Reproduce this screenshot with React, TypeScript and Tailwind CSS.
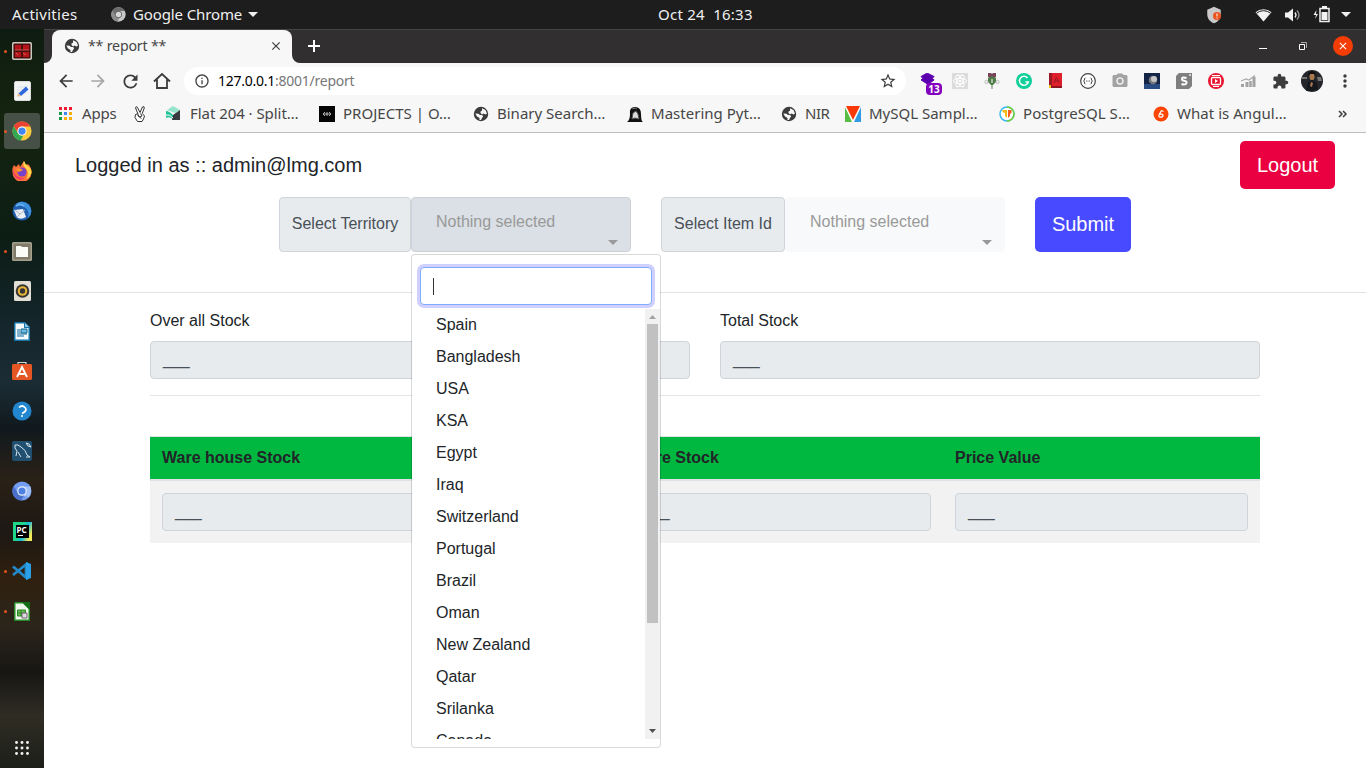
import type { ReactNode } from 'react';
import {
  MdArrowBack,
  MdArrowForward,
  MdClose,
  MdExtension,
  MdInfoOutline,
  MdMoreVert,
  MdPhotoCamera,
  MdRefresh,
  MdShield,
  MdStarBorder,
} from 'react-icons/md';

const countries = [
  'Spain', 'Bangladesh', 'USA', 'KSA', 'Egypt', 'Iraq', 'Switzerland', 'Portugal',
  'Brazil', 'Oman', 'New Zealand', 'Qatar', 'Srilanka', 'Canada',
];

function Globe() {
  return (
    <svg className="shrink-0" width="16" height="16" viewBox="0 0 16 16">
      <circle cx="8" cy="8" r="7.200" fill="#3c3c3c" />
      <path d="M9 2.200 12.500 4l1.500 3.500-1.500 1-2-1L9 8.500 7.500 7V5.500L9 4.800zM2.300 7.500l3.200.3L7 9h2l1.200 1.200L9 12l-1 2H6.500v-2L4 10.500z" fill="#f7f7f7" />
    </svg>
  );
}

function Wheel({ size, gray = false }: { size: number; gray?: boolean }) {
  const [a, b, c, d] = gray
    ? ['#6d6d6d', '#8c8c8c', '#c9c9c9', '#d8d8d8']
    : ['#ea4335', '#34a853', '#fbc93c', '#4285f4'];
  return (
    <svg width={size} height={size} viewBox="0 0 48 48">
      <circle cx="24" cy="24" r="23" fill={c} />
      <path d="M4 12.500A23 23 0 0 1 44 13H24a11 11 0 0 0-9.500 16.500z" fill={a} />
      <path d="M4 12.500 14.500 29.500A11 11 0 0 0 27 34.600L21 47A23 23 0 0 1 4 12.500z" fill={b} />
      <circle cx="24" cy="24" r="11" fill={gray ? '#555' : '#fff'} />
      <circle cx="24" cy="24" r="8.700" fill={d} />
    </svg>
  );
}

function Caret({ className }: { className: string }) {
  return (
    <svg className={className} width="10" height="5" viewBox="0 0 10 5">
      <path d="M0 0h10L5 5z" fill="currentColor" />
    </svg>
  );
}

function TopBar() {
  return (
    <header className="flex h-[29px] shrink-0 items-center bg-[#1d1d1d] text-[15px] text-[#f0f0f0]">
      <span className="ml-3 w-[99px] tracking-[0.3px]">Activities</span>
      <Wheel size={15} gray />
      <span className="ml-[7px] w-[115px] whitespace-nowrap tracking-[-0.12px]">Google Chrome</span>
      <Caret className="ml-0 text-[#eee]" />
      <span className="ml-[400px] whitespace-pre tracking-[0.25px]">Oct 24  16:33</span>
      <div className="ml-auto flex items-center pr-[15px]">
        <div className="relative mr-[33px] h-4 w-[15px] text-[#c9c9c9]">
          <MdShield size={18} className="-ml-[2px] -mt-px" />
          <svg className="absolute left-[6px] top-[5px]" width="8" height="8" viewBox="0 0 8 8">
            <circle cx="4" cy="4" r="4" fill="#e95420" />
            <path d="M4 1.500v3M4 5.500v1" stroke="#fff" />
          </svg>
        </div>
        <svg width="17" height="14" viewBox="0 0 17 14">
          <path d="M.5 4.200a12 12 0 0 1 16 0L8.500 13.500z" fill="#f2f2f2" />
          <path d="M1.500 5.200a11 11 0 0 1 14 0" fill="none" stroke="#1d1d1d" strokeWidth="1" />
        </svg>
        <svg className="ml-[13px]" width="16" height="14" viewBox="0 0 16 14">
          <path d="M0 4.500h3L8 .5v13L3 9.500H0z" fill="#f2f2f2" />
          <path d="M10 4.500q2 2.500 0 5" fill="none" stroke="#eee" strokeWidth="1.300" />
          <path d="M12 2.500q4 4.500 0 9" fill="none" stroke="#999" strokeWidth="1.300" />
        </svg>
        <svg className="ml-[12px]" width="18" height="17" viewBox="0 0 18 17">
          <path d="M3.500 4 .5 9H3l-1 4 3-5H3z" fill="#eee" />
          <path d="M7 2.500h9v13H7z" fill="none" stroke="#f2f2f2" strokeWidth="1.500" />
          <path d="M9 0h5v2H9zM8.500 6h6v8h-6z" fill="#f2f2f2" />
        </svg>
        <Caret className="ml-[10px] text-[#eee]" />
      </div>
    </header>
  );
}

function DockIcon({ children, running = false, active = false }: { children: ReactNode; running?: boolean; active?: boolean }) {
  return (
    <div className="flex h-10 w-11 items-center">
      <span className={`z-10 ml-1 h-[3px] w-[3px] shrink-0 rounded-full ${running ? 'bg-[#e95420]' : ''}`} />
      <span className={`-ml-[3px] flex h-9 w-9 shrink-0 items-center justify-center rounded-[3px] ${active ? 'bg-[#465047]' : ''}`}>
        {children}
      </span>
    </div>
  );
}

function Dock() {
  return (
    <nav className="flex w-11 shrink-0 flex-col bg-[linear-gradient(180deg,#0d1c10_0%,#15240f_12%,#0c1d14_28%,#132429_38%,#1b2c35_48%,#10191d_54%,#2a2117_61%,#1c1813_68%,#30200f_74%,#2b251b_81%,#171614_87%,#2f2d23_93%,#1c1e19_100%)] pt-[2px]">
      <DockIcon running>
        <svg className="mb-px" width="20" height="18" viewBox="0 0 20 18">
          <rect x=".7" y=".7" width="18.600" height="16.600" rx="1.500" fill="#4e100f" stroke="#c9c9c0" strokeWidth="1.500" />
          <path d="M3 3h6v5H3zM11 3h6v5h-6zM3 10h6v5H3zM11 10h6v5h-6z" fill="#b51419" />
          <path d="m4 11 2 2m5-2 3 2M3 8h14" stroke="#e58b84" strokeWidth=".6" />
        </svg>
      </DockIcon>
      <DockIcon>
        <svg width="17" height="20" viewBox="0 0 17 20">
          <rect x=".5" y=".5" width="16" height="19" rx="1.500" fill="#f3f4f4" stroke="#ddd" />
          <path d="M3 6h10M3 9h10M3 12h10" stroke="#d3dae0" strokeWidth=".7" />
          <path d="m4.500 12.500 7.500-7 2.500 3-7.500 6.500z" fill="#2f68dd" />
          <path d="m3 15.500 1.500-3 2.500 2.500z" fill="#e9b679" />
        </svg>
      </DockIcon>
      <DockIcon running active><Wheel size={20} /></DockIcon>
      <DockIcon>
        <svg width="20" height="20" viewBox="0 0 20 20">
          <path d="M2 4 4 6 7 3l1 3 4-6q1 3 3 4l1-1q4 4 3.500 9A9.500 9.500 0 0 1 .5 11Q0 7 2 4z" fill="#ff7139" />
          <path d="M12 0q1 3 3 4 5 4 4.500 8-2 5-5 6 3-7-1-11Q10 4 12 0z" fill="#ffd34a" />
          <path d="M.7 8q2 9 12 9-4 3-8 .5Q.5 14 .7 8z" fill="#f33b68" />
          <circle cx="10" cy="11" r="4.500" fill="#7542c9" />
          <path d="M4 8q4-2 7 1-2 1-4 2-2 0-3-3z" fill="#ff972f" />
        </svg>
      </DockIcon>
      <DockIcon>
        <svg width="20" height="20" viewBox="0 0 20 20">
          <circle cx="10" cy="10" r="9.500" fill="#215ead" />
          <path d="M4 3Q11-2 17 4q5 7-1 13 2-8-4-11-4-3-8-3z" fill="#3d91dd" />
          <path d="m2 9 9-1 3 8q-5 3-9 .5z" fill="#e9eef3" />
          <path d="m3 9 5 4 5-4M8 13l-3 3" fill="none" stroke="#aab7c6" />
          <path d="M4 5q4-3 8 0" fill="none" stroke="#65b3ee" strokeWidth="2" />
        </svg>
      </DockIcon>
      <DockIcon running>
        <svg width="20" height="19" viewBox="0 0 20 19">
          <rect width="20" height="19" rx="1.500" fill="#a6a18e" />
          <rect x="1.500" y="1.500" width="17" height="16" rx="1" fill="#807b6b" />
          <path d="M4 4h5l1 1h6v10H4z" fill="#fafaf7" />
        </svg>
      </DockIcon>
      <DockIcon>
        <svg width="17" height="20" viewBox="0 0 17 20">
          <rect width="17" height="20" rx="1.500" fill="#e3dfd4" />
          <circle cx="8.500" cy="10" r="6.800" fill="#343434" />
          <circle cx="8.500" cy="10" r="4.800" fill="#e8b636" />
          <circle cx="8.500" cy="10" r="2.700" fill="#343434" />
        </svg>
      </DockIcon>
      <DockIcon>
        <svg width="16" height="19" viewBox="0 0 16 19">
          <path d="M1 0h10l5 5v14H0V1z" fill="#1473a7" />
          <path d="M1.500 1.500H10V6h4.500v11.500h-13z" fill="#f6fafc" />
          <path d="m11 1 4 4h-4z" fill="#90c6df" />
          <path d="M3 8h3M3 10h3M3 12h10M3 14h7M7 7h6v4H7z" stroke="#0c6998" strokeWidth="1" fill="#74b8da" />
        </svg>
      </DockIcon>
      <DockIcon>
        <svg className="mb-px" width="20" height="20" viewBox="0 0 20 20">
          <path d="M6 4V1.500h8V4" fill="none" stroke="#d7d4ca" strokeWidth="1.200" />
          <path d="M1 3h18l1 1v14l-1 1H1l-1-1V4z" fill="#e65625" />
          <path d="m5 16 5-10 5 10M6 13h8" stroke="#fff" strokeWidth="1.900" fill="none" />
        </svg>
      </DockIcon>
      <DockIcon>
        <svg width="20" height="20" viewBox="0 0 20 20">
          <circle cx="10" cy="10" r="9.500" fill="#2387d0" />
          <path d="M7 6.500q3-3 6 0t-3 6" fill="none" stroke="#fff" strokeWidth="1.700" />
          <circle cx="10" cy="15" r="1" fill="#fff" />
        </svg>
      </DockIcon>
      <DockIcon>
        <svg width="20" height="20" viewBox="0 0 20 20">
          <rect width="20" height="20" rx="2" fill="#204f70" />
          <path d="M4 15 5 10 3 7V4q3-1 6 2 5 3 6 8l3 2-4 0M6 11l3 5M14 2l2 3 3 1-2-3z" fill="none" stroke="#d4e5ef" strokeWidth="1" />
        </svg>
      </DockIcon>
      <DockIcon>
        <svg width="20" height="20" viewBox="0 0 20 20">
          <circle cx="10" cy="10" r="9.500" fill="#729df0" />
          <path d="M1.500 5A9.500 9.500 0 0 0 9 19.400L13 13 6 12z" fill="#4c6fca" />
          <path d="M10 5.500h8.500Q20 11 17 16l-5-1z" fill="#a3c0f7" />
          <circle cx="10" cy="10" r="4.800" fill="#e8effd" />
          <circle cx="10" cy="10" r="3.600" fill="#4c80e1" />
        </svg>
      </DockIcon>
      <DockIcon>
        <div className="flex h-[19px] w-[19px] items-center justify-center bg-[linear-gradient(115deg,#20d789_40%,#16bada_60%,#f2e958_85%)]">
          <div className="flex h-[13px] w-[13px] flex-col bg-black pl-px text-[8px] font-bold leading-[9px] text-white">
            PC<span className="ml-px mt-px h-px w-[5px] bg-white" />
          </div>
        </div>
      </DockIcon>
      <DockIcon running>
        <svg width="20" height="18" viewBox="0 0 20 18">
          <path d="m1 4.500 13 11v-13L1 13" fill="none" stroke="#2489ca" strokeWidth="2.700" />
          <path d="m14 0 5 2v14l-5 2z" fill="#2ba0e8" />
        </svg>
      </DockIcon>
      <DockIcon running>
        <svg width="16" height="19" viewBox="0 0 16 19">
          <path d="M1 0h9l6 6v13H0V1z" fill="#238a25" />
          <path d="M1.500 1.500H9L14.500 7v10.500h-13z" fill="#f1f7ed" />
          <path d="M8 0h8v8z" fill="#126d17" />
          <path d="M3.500 8h8v6h-8zM3.500 11h8M7 8v6" fill="#77b854" stroke="#238a25" />
          <path d="M8 11h5v5H8z" fill="#ddd" stroke="#735b74" />
        </svg>
      </DockIcon>
      <svg className="mb-[13px] ml-[15px] mt-auto" width="14" height="14" viewBox="0 0 13 13" fill="#f2f2f2">
        {[1.4, 6.5, 11.6].map((y) => [1.4, 6.5, 11.6].map((x) => <circle key={`${x}-${y}`} cx={x} cy={y} r="1.350" />))}
      </svg>
    </nav>
  );
}

function TabStrip() {
  return (
    <div className="flex h-[34px] border-t border-[#454545] bg-[#322f30]">
      <span className="w-2 bg-[#f7f7f7]"><span className="block h-full rounded-br-lg bg-[#322f30]" /></span>
      <div className="flex h-[34px] w-60 items-center rounded-t-lg bg-[#f7f7f7] px-3 pb-[2px] text-[14.2px] text-[#464646]">
        <Globe />
        <span className="ml-2 tracking-[-0.2px]">** report **</span>
        <MdClose size={14} className="ml-auto mr-[-3px] text-[#3c3c3c]" />
      </div>
      <span className="w-2 bg-[#f7f7f7]"><span className="block h-full rounded-bl-lg bg-[#322f30]" /></span>
      <svg className="ml-2 mt-[10px]" width="12" height="12"><path d="M6 0v12M0 6h12" stroke="#fff" strokeWidth="2" /></svg>
      <div className="ml-auto flex items-center pb-px pr-[13px]">
        <span className="mr-8 mt-1 h-px w-2 bg-white" />
        <svg className="mr-[26px]" width="8" height="8">
          <path d="M2 .5h5.500V6" fill="none" stroke="#aaa" /><path d="M.5 2.500h5v5h-5z" fill="none" stroke="#fff" />
        </svg>
        <span className="flex h-5 w-5 items-center justify-center rounded-full bg-[#f43d04] text-white"><MdClose size={12} /></span>
      </div>
    </div>
  );
}

function Extensions() {
  return (
    <div className="ml-[14px] flex items-center">
      <div className="relative h-[17px] w-[32px]">
        <svg width="16" height="14" viewBox="0 0 18 16"><path d="m8 0 8 4-2 2 2 2-7 5-8-5 2-2-2-2z" fill="#5b00ae" stroke="#5b00ae" /></svg>
        <span className="absolute left-[6px] top-[10px] h-3 w-4 rounded-sm bg-[#8200bd] text-center text-[10px] font-bold leading-[12px] text-white">13</span>
      </div>
      <svg className="mr-4" width="16" height="16" viewBox="0 0 16 16">
        <path d="M0 0h16v16H0z" fill="#dcdcdc" />
        <g fill="none" stroke="#fff"><ellipse cx="8" cy="8" rx="6.500" ry="2.600" /><ellipse cx="8" cy="8" rx="6.500" ry="2.600" transform="rotate(60 8 8)" /><ellipse cx="8" cy="8" rx="6.500" ry="2.600" transform="rotate(120 8 8)" /></g>
        <circle cx="8" cy="8" r="1.200" fill="#fff" />
      </svg>
      <svg className="mr-4" width="16" height="16" viewBox="0 0 16 16">
        <path d="M4 0h3l1 1 1-1h3v4l-4 2-4-2z" fill="#7a435c" />
        <path d="m4 5 4-2 4 2v4l-4 4-4-4z" fill="#4e7c46" />
        <circle cx="2.500" cy="9" r="1.700" fill="#eee" stroke="#aaa" strokeWidth=".7" /><circle cx="13.500" cy="9" r="1.700" fill="#eee" stroke="#aaa" strokeWidth=".7" />
        <path d="M7 7h2M7 9h2" stroke="#fff" /><path d="M8 13v3" stroke="#777" />
      </svg>
      <svg className="mr-4" width="16" height="16" viewBox="0 0 16 16">
        <circle cx="8" cy="8" r="8" fill="#11cf9a" />
        <path d="M11.500 5A4.500 4.500 0 1 0 12.300 9H9.500" fill="none" stroke="#fff" strokeWidth="1.500" />
      </svg>
      <svg className="mr-4" width="16" height="16" viewBox="0 0 16 16">
        <path d="M1 0h13v15H1z" fill="#df202b" /><path d="M1 0h3v14H1z" fill="#9b1825" />
        <path d="m6 10 2.500-6 3 6M7 8h4" fill="none" stroke="#9b1825" /><path d="M1 13h13v2H1z" fill="#8d1420" /><path d="M1 12h2v3H1z" fill="#ebc51a" />
      </svg>
      <svg className="mr-4" width="16" height="16" viewBox="0 0 16 16">
        <circle cx="8" cy="8" r="7.300" fill="#fff" stroke="#444" strokeWidth="1.200" />
        <path d="M5.500 5q-1.500 0-1 2l-1 1 1 1q-.5 2 1 2m5-6q1.500 0 1 2l1 1-1 1q.5 2-1 2" fill="none" stroke="#444" />
        <path d="M6 8h1M7.500 8h1M9 8h1" stroke="#444" strokeWidth=".8" />
      </svg>
      <MdPhotoCamera size={18} className="-ml-px mr-[15px] text-[#a3a3a3]" />
      <svg className="mr-4" width="16" height="16" viewBox="0 0 16 16">
        <path d="M0 0h16v16H0z" fill="#142447" /><path d="M0 11h16v5H0z" fill="#294c83" />
        <circle cx="9" cy="7" r="4.300" fill="#777980" /><circle cx="10" cy="6" r="3" fill="#c5c5c5" />
      </svg>
      <svg className="mr-4" width="16" height="16" viewBox="0 0 16 16">
        <path d="M3 0h13v13l-3 3H0V3z" fill="#7f7f7f" />
        <path d="M10.500 5Q6 3.500 6 6q0 1.500 2 1.700 3 .5 2.500 2.300Q9.500 12.500 5.500 11" stroke="#fff" strokeWidth="2" fill="none" /><circle cx="14" cy="2" r="1" fill="#eee" />
      </svg>
      <svg className="mr-4" width="16" height="16" viewBox="0 0 16 16">
        <circle cx="8" cy="8" r="8" fill="#e91430" /><rect x="3.500" y="4.500" width="9" height="7" rx="1" fill="none" stroke="#fff" strokeWidth="1.300" />
        <path d="m7 6 3 2-3 2z" fill="#fff" /><path d="M4 2.500h8M5 13.500h6" stroke="#fff" />
      </svg>
      <svg className="mr-[15px]" width="17" height="16" viewBox="0 0 17 16">
        <path d="M2.500 14v-3M7 14V9M14 14V4" stroke="#a2a2a2" strokeWidth="3" /><path d="M10.500 14V8" stroke="#a2a2a2" strokeWidth="2.500" /><path d="m1 8 5-2 3 1 6-4.500" fill="none" stroke="#aaa" strokeWidth="1.300" />
      </svg>
      <MdExtension size={17} className="mr-3 text-[#3c3c3c]" />
      <svg width="22" height="22" viewBox="0 0 22 22">
        <circle cx="11" cy="11" r="11" fill="#25262b" />
        <path d="M1 7h5v2H1zM16 7h4l1 4h-4z" fill="#77736f" /><ellipse cx="11" cy="6.500" rx="2.500" ry="3.700" fill="#a7784d" />
        <path d="M7 6q0-5 4-5t4 5l-2-2H9z" fill="#111" /><path d="m5 21 2-9 4-2 5 3 1 7z" fill="#14171d" /><path d="m10 12 2 1-1 4-2-1z" fill="#a7784d" />
      </svg>
      <MdMoreVert size={20} className="ml-3 mr-[11px] text-[#3c3c3c]" />
    </div>
  );
}

function Toolbar() {
  return (
    <div className="flex h-9 items-center bg-[#f7f7f7]">
      <MdArrowBack size={20} className="ml-3 text-[#3c3c3c]" />
      <MdArrowForward size={20} className="ml-3 text-[#a6a6a6]" />
      <MdRefresh size={21} className="ml-[12px] text-[#3c3c3c]" />
      <svg className="ml-3" width="18" height="18" viewBox="0 0 18 18"><path d="M1 9.500 9 2l8 7.500M4 7.500V16h10V7.500" fill="none" stroke="#3c3c3c" strokeWidth="1.800" /></svg>
      <div className="ml-[13px] flex h-7 w-[722px] items-center rounded-full bg-white text-[14px] text-[#777]">
        <MdInfoOutline size={16} className="ml-[10px] text-[#444]" />
        <span className="mb-[2px] ml-2 tracking-[-0.25px]"><span className="text-black">127.0.0.1</span>:8001/report</span>
        <MdStarBorder size={18} className="ml-auto mr-[9px] text-[#3c3c3c]" />
      </div>
      <Extensions />
    </div>
  );
}

function Bookmarks() {
  return (
    <div className="flex h-[34px] items-center border-b border-[#bdbdbd] bg-[#f7f7f7] pb-[4px] text-[15px] text-[#464646] whitespace-nowrap">
      <div className="flex w-[90px] items-center pl-[15px]">
        <svg width="13" height="13" viewBox="0 0 13 13">
          <path d="M0 0h3v3H0zM5 0h3v3H5zM10 0h3v3h-3z" fill="#f01a31" />
          <path d="M0 5h3v3H0z" fill="#159b47" /><path d="M5 5h3v3H5z" fill="#4285f4" /><path d="M10 5h3v3h-3z" fill="#fbad09" />
          <path d="M0 10h3v3H0z" fill="#159b47" /><path d="M5 10h3v3H5zM10 10h3v3h-3z" fill="#fbad09" />
        </svg>
        <span className="ml-[10px] tracking-[-0.2px]">Apps</span>
      </div>
      <svg className="mr-5" width="12" height="16" viewBox="0 0 12 16" fill="none" stroke="#333" strokeWidth="1" strokeLinejoin="round">
        <path d="M4 8 1.500 1.800Q2-.2 3.300 1.200L6 6.500 8.500.900Q10.500 0 10.300 2L8.200 7.500 10.500 10l-1 3-1.500 2.500H3.500L1 11.500 1.500 8.500 3.500 7.800 5.500 11" fill="#fff" />
        <path d="M6.500 7.500 8 10l-2.500 1-2-1.500M5.500 11l2 1.500" />
      </svg>
      <div className="flex w-[153px] items-center">
        <svg width="15" height="15" viewBox="0 0 15 15">
          <path d="m7 0 7 4-5 3-8-3z" fill="#95e5ce" /><path d="M0 5q3 0 7 4v4Q3 10 0 12z" fill="#20c398" /><path d="m7 9 7-5v10H6z" fill="#373b3f" /><path d="M0 9q4-1 7 3" fill="none" stroke="#f7f7f7" />
        </svg>
        <span className="ml-[9px] tracking-[-0.05px]">Flat 204 · Split…</span>
      </div>
      <div className="flex w-[154px] items-center">
        <svg width="16" height="16" viewBox="0 0 16 16"><path d="M0 0h16v16H0z" fill="#050505" /><path d="m6 6-2 2 2 2m4-4 2 2-2 2M5 8h6M8 6v4" fill="none" stroke="#ddd" strokeWidth=".8" /></svg>
        <span className="ml-2 tracking-[0.02px]">PROJECTS | O…</span>
      </div>
      <div className="flex w-[154px] items-center"><Globe /><span className="ml-2">Binary Search…</span></div>
      <div className="flex w-[154px] items-center">
        <svg width="16" height="16" viewBox="0 0 16 16"><path d="M0 16q3-2 3-8Q2 1 8 1t6 7 2 8z" fill="#111" /><path d="m5 13 1-6 3-2 2 3 1 5-4-1zM5 3l2-1 3 1" fill="#ddd" stroke="#555" /></svg>
        <span className="ml-2 tracking-[0.02px]">Mastering Pyt…</span>
      </div>
      <div className="flex w-[64px] items-center"><Globe /><span className="ml-2 tracking-[-0.5px]">NIR</span></div>
      <div className="flex w-[154px] items-center">
        <svg width="16" height="16" viewBox="0 0 16 16"><path d="M0 0h16v16H0z" fill="#fff" /><path d="M0 1v15h7z" fill="#58bd45" /><path d="M16 1v15H9z" fill="#329ae2" /><path d="M1 0h14L8 14z" fill="#fa390a" /></svg>
        <span className="ml-2">MySQL Sampl…</span>
      </div>
      <div className="flex w-[154px] items-center">
        <svg width="16" height="16" viewBox="0 0 16 16"><circle cx="8" cy="8" r="7" fill="#fff" stroke="#35b8f2" strokeWidth="1.500" /><path d="M8 1a7 7 0 0 1 0 14" fill="none" stroke="#75cf31" strokeWidth="1.500" /><path d="M3.500 4H8v8L6 10V7L3.500 6z" fill="#f6ba15" /><path d="M9 4h3.500v3L11 8v2l-2 2z" fill="#f55c1d" /></svg>
        <span className="ml-2 tracking-[0.05px]">PostgreSQL S…</span>
      </div>
      <div className="flex items-center">
        <svg width="16" height="16" viewBox="0 0 16 16"><circle cx="8" cy="8" r="7.500" fill="#fa4504" /><path d="M8.500 4.500 6.500 8q-1.500 3 .8 3.200 2.700 0 2.700-2 0-1.500-3-.9m1.500-3.800 2 1" fill="none" stroke="#fff" strokeWidth="1.200" /></svg>
        <span className="ml-2 tracking-[0.04px]">What is Angul…</span>
      </div>
      <svg className="ml-auto mr-[18px]" width="10" height="8" viewBox="0 0 10 8"><path d="m1 1 3 3-3 3m4-6 3 3-3 3" fill="none" stroke="#3c3c3c" strokeWidth="1.500" /></svg>
    </div>
  );
}

function Blank() {
  return <div className="flex h-[38px] items-center rounded-[4px] border border-[#ced4da] bg-[#e7ebee] px-3 text-base text-[#495057]">___</div>;
}

function SelectBox({ label, open = false, children }: { label: string; open?: boolean; children?: ReactNode }) {
  return (
    <div className="relative flex h-[55px]">
      <div className={`flex items-center justify-center rounded-[4px] border border-[#ced4da] bg-[#e7ebee] pb-0.5 text-base text-[#495057] ${open ? 'w-[132px]' : 'w-[124px]'}`}>{label}</div>
      <div className={`flex w-[220px] flex-col rounded-[4px] border pl-6 pr-3 pt-3 text-[#999] ${open ? 'border-[#ced1d9] bg-[#dae0e5]' : 'border-[#f8f9fa] bg-[#f8f9fa]'}`}>
        <span className="text-base">Nothing selected</span>
        <Caret className="ml-auto mt-[6px]" />
      </div>
      {children}
    </div>
  );
}

function CountryMenu() {
  return (
    <div className="absolute left-[132px] top-[57px] z-10 flex h-[494px] w-[250px] flex-col rounded-[4px] border border-black/15 bg-white bg-clip-padding pt-3">
      <div className="mx-2 flex h-[38px] shrink-0 items-center rounded-[4px] border border-[#80aefc] bg-white pl-3 shadow-[0_0_0_3px_#d0d0ff]">
        <span className="mt-px h-[17px] w-px bg-[#333]" />
      </div>
      <div className="mt-[4px] flex h-[430px]">
        <ul className="min-w-0 flex-1 overflow-hidden">
          {countries.map((name) => <li key={name} className="h-8 pl-6 text-base leading-8 text-[#212529]">{name}</li>)}
        </ul>
        <div className="flex w-[15px] flex-col items-center bg-[#f1f1f1]">
          <svg className="mt-[6px]" width="7" height="4"><path d="M0 4h7L3.500 0z" fill="#a3a3a3" /></svg>
          <div className="mt-[5px] h-[299px] w-[11px] bg-[#c1c1c1]" />
          <svg className="mb-[6px] mt-auto" width="7" height="4"><path d="M0 0h7L3.500 4z" fill="#505050" /></svg>
        </div>
      </div>
    </div>
  );
}

function Report() {
  return (
    <main className="flex-1 bg-white text-base text-[#212529] font-['Liberation_Sans',sans-serif]">
      <div className="flex h-16 items-center justify-between pl-[31px] pr-[31px] text-xl">
        <span>Logged in as :: admin@lmg.com</span>
        <button className="h-12 w-[95px] rounded-[5px] bg-[#ea0040] text-xl text-white">Logout</button>
      </div>
      <div className="flex h-24 items-start gap-[30px] border-b border-[#e2e2e2] pl-[235px]">
        <SelectBox label="Select Territory" open><CountryMenu /></SelectBox>
        <SelectBox label="Select Item Id" />
        <button className="h-[55px] w-24 rounded-[5px] bg-[#474aff] pb-0.5 text-xl text-white">Submit</button>
      </div>
      <div className="ml-[106px] w-[1110px] pt-4">
        <div className="grid grid-cols-2 gap-[30px]">
          <div><div className="mb-2 h-6 leading-6">Over all Stock</div><Blank /></div>
          <div><div className="mb-2 h-6 leading-6">Total Stock</div><Blank /></div>
        </div>
        <hr className="mb-10 mt-4 border-[#e5e5e5]" />
        <table className="w-full table-fixed border-separate border-spacing-0">
          <colgroup><col className="w-[468px]" /><col className="w-[325px]" /><col className="w-[317px]" /></colgroup>
          <thead>
            <tr className="h-[45px] bg-[#00b83f] text-left">
              {['Ware house Stock', 'Store Stock', 'Price Value'].map((h) => (
                <th key={h} className="border-b-2 border-t border-[#dee2e6] px-3 py-0 font-bold">{h}</th>
              ))}
            </tr>
          </thead>
          <tbody>
            <tr className="h-[62px] bg-[#f2f2f2]">
              {[0, 1, 2].map((n) => <td key={n} className="px-3 py-0"><Blank /></td>)}
            </tr>
          </tbody>
        </table>
      </div>
    </main>
  );
}

export default function App() {
  return (
    <div className="flex h-[768px] w-[1366px] flex-col overflow-hidden font-['Noto_Sans',sans-serif]">
      <TopBar />
      <div className="flex min-h-0 flex-1">
        <Dock />
        <div className="flex min-w-0 flex-1 flex-col">
          <TabStrip />
          <Toolbar />
          <Bookmarks />
          <Report />
        </div>
      </div>
    </div>
  );
}
